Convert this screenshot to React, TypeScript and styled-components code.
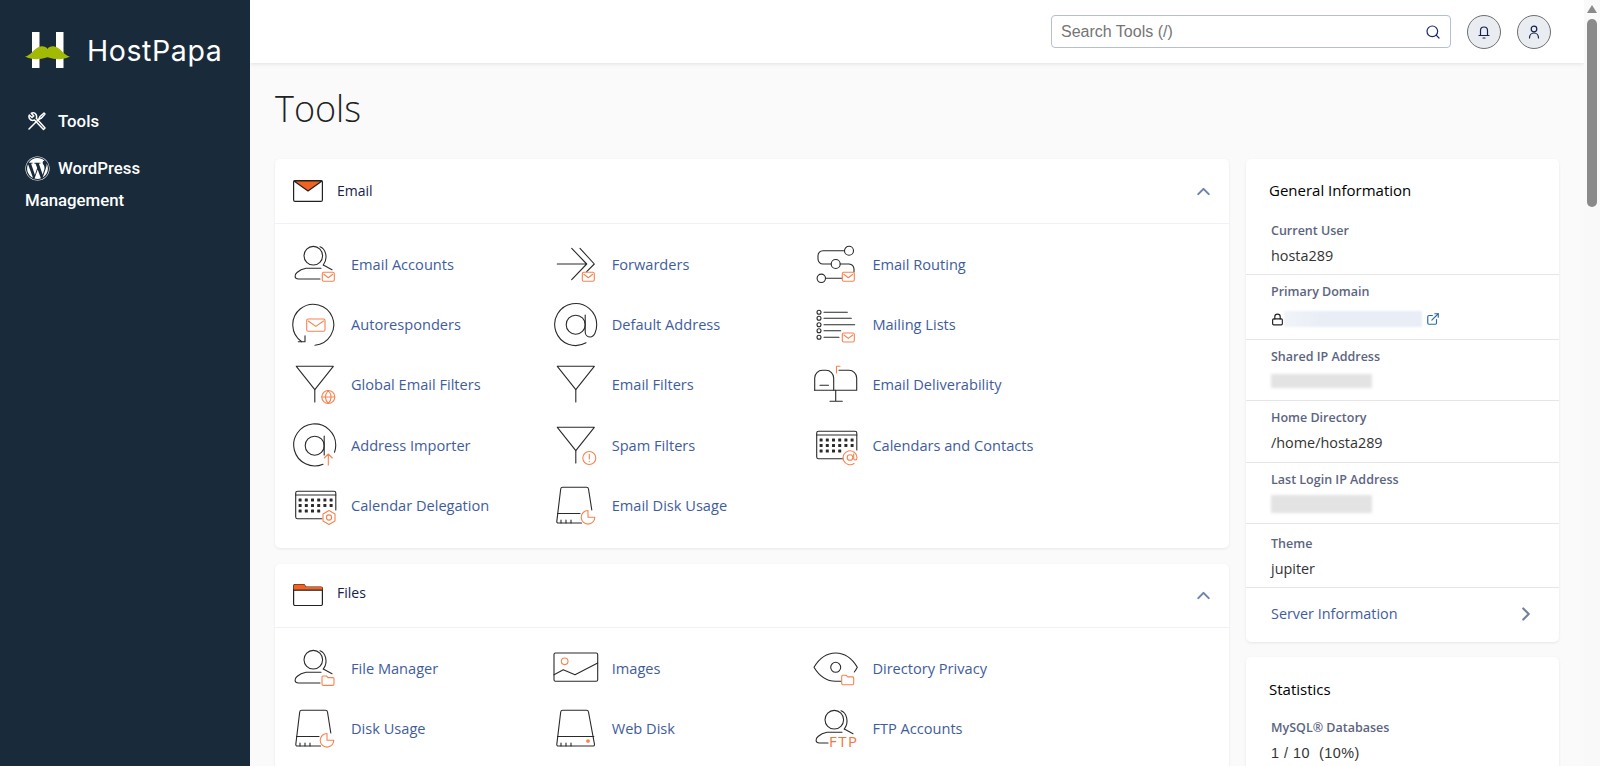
import React from "react";
import styled, { createGlobalStyle } from "styled-components";
import { ChevronUp, ChevronRight, Search, Lock, ExternalLink } from "lucide-react";
import { FaWordpress } from "react-icons/fa";

const Global = createGlobalStyle`
  html, body { margin: 0; padding: 0; height: 100%; overflow: hidden; }
  body { font-family: "Open Sans", "Liberation Sans", sans-serif; background: #fafafa; }
  #root { height: 100%; }
  * { box-sizing: border-box; }
`;

const Shell = styled.div`
  display: flex;
  height: 100vh;
  overflow: hidden;
`;

const Sidebar = styled.aside`
  width: 250px;
  flex: none;
  background: #192b3a;
  color: #fff;
  padding: 31px 25px 0;
`;

const LogoRow = styled.div`
  display: flex;
  align-items: center;
  height: 38px;
  gap: 16px;
  margin-bottom: 35.5px;
`;

const LogoText = styled.span`
  font-family: "Inter", "Lato", sans-serif;
  font-size: 28.5px;
  font-weight: 400;
  letter-spacing: 0.6px;
  line-height: 38px;
  padding-top: 2px;
  color: #fff;
`;

const NavLink = styled.a<{ $gap?: number }>`
  display: block;
  font-family: Roboto, sans-serif;
  font-weight: 500;
  font-size: 16.8px;
  line-height: 32px;
  color: #fff;
  margin-bottom: ${(p) => p.$gap ?? 0}px;
`;

const NavIcon = styled.span`
  display: inline-flex;
  width: 33px;
  height: 26px;
  vertical-align: middle;
  align-items: center;
  font-size: 25px;
  margin-top: -3px;
`;

const Main = styled.main`
  flex: 1;
  min-width: 0;
  height: 100vh;
  overflow: hidden;
  background: #fafafa;
`;

const ScrollRail = styled.div`
  width: 16px;
  flex: none;
  background: #f9f9f9;
  display: flex;
  flex-direction: column;
  align-items: center;
  padding-top: 5px;
`;

const ScrollArrow = styled.div`
  width: 0;
  height: 0;
  border-left: 5.5px solid transparent;
  border-right: 5.5px solid transparent;
  border-bottom: 8px solid #8a8a8a;
  margin-bottom: 6px;
`;

const ScrollThumb = styled.div`
  width: 10px;
  height: 188px;
  border-radius: 5px;
  background: #8a8a8a;
`;

const TopBar = styled.header`
  height: 63px;
  background: #fff;
  box-shadow: 0 1px 4px rgba(0, 0, 0, 0.1);
  display: flex;
  justify-content: flex-end;
  align-items: flex-start;
  padding: 15px 33px 0 0;
  gap: 16px;
`;

const SearchBox = styled.div`
  width: 400px;
  height: 33px;
  border: 1px solid #b4bfd4;
  border-radius: 4px;
  background: #fff;
  display: flex;
  align-items: center;
  justify-content: space-between;
  padding: 0 9px;
  color: #152a6b;
`;

const SearchInput = styled.input`
  border: 0;
  outline: 0;
  flex: 1;
  font-family: "Liberation Sans", Arial, sans-serif;
  font-size: 16px;
  color: #333;
  padding: 0;
  background: transparent;
  &::placeholder { color: #757575; opacity: 1; }
`;

const RoundButton = styled.button`
  width: 34px;
  height: 34px;
  border-radius: 50%;
  border: 1px solid #6f6f6f;
  background: #e9ecf1;
  display: flex;
  align-items: center;
  justify-content: center;
  padding: 0;
  color: #14224d;
`;

const Title = styled.h1`
  margin: 0;
  height: 96px;
  padding: 21px 0 0 25px;
  font-family: "Open Sans", sans-serif;
  font-weight: 300;
  font-size: 36px;
  line-height: 49px;
  color: #222;
`;

const Columns = styled.div`
  display: grid;
  grid-template-columns: 1fr 313px;
  gap: 17px;
  padding: 0 25px;
  align-items: start;
`;

const Stack = styled.div<{ $gap: number }>`
  display: flex;
  flex-direction: column;
  gap: ${(p) => p.$gap}px;
`;

const Card = styled.section`
  background: #fff;
  border-radius: 5px;
  box-shadow: 0 1px 3px rgba(0, 0, 0, 0.08);
`;

const CardHead = styled.div<{ $h: number }>`
  height: ${(p) => p.$h}px;
  display: flex;
  align-items: center;
  padding: 0 15px 0 18px;
  border-bottom: 1.5px solid #eff1f7;
  color: #6d84ad;
`;

const CardTitle = styled.span<{ $lift: number }>`
  font-size: 14px;
  color: #14224d;
  margin-left: 14px;
  margin-bottom: ${(p) => p.$lift}px;
  flex: 1;
`;

const ToolGrid = styled.div<{ $pt: number; $pb: number; $row: number }>`
  display: grid;
  grid-template-columns: repeat(3, 260.7px);
  grid-auto-rows: ${(p) => p.$row}px;
  padding: ${(p) => p.$pt}px 0 ${(p) => p.$pb}px 17px;
`;

const Tool = styled.a`
  display: flex;
  align-items: center;
  gap: 15px;
  font-size: 14.6px;
  color: #3f5d9c;
`;

const Glyph = styled.svg`
  width: 46px;
  height: 46px;
  flex: none;
  margin-right: -2px;
  fill: none;
  stroke: #2a2a2a;
  stroke-width: 1.1;
  stroke-linecap: round;
  stroke-linejoin: round;
`;

const Accent = styled.g`
  stroke: #f8824f;
`;

const Dots = styled.g`
  fill: #2a2a2a;
  stroke: none;
`;

const FtpLabel = styled.text`
  font-family: "Open Sans", sans-serif;
  font-size: 15px;
  letter-spacing: 1.5px;
  fill: #f8733a;
  stroke: none;
`;

const HeadGlyph = styled.svg`
  width: 30px;
  height: 22px;
  flex: none;
  fill: #fff;
  stroke: #222;
  stroke-width: 1.2;
  stroke-linejoin: round;
`;

const InfoCard = styled(Card)`
  overflow: hidden;
`;

const InfoTitle = styled.h2<{ $h: number }>`
  margin: 0;
  height: ${(p) => p.$h}px;
  display: flex;
  align-items: flex-end;
  padding: 0 24px 0 23px;
  font-size: 15px;
  font-weight: 500;
  line-height: 20px;
  color: #000;
`;

const InfoRow = styled.div<{ $h: number; $top?: number; $line?: boolean }>`
  height: ${(p) => p.$h}px;
  padding: ${(p) => p.$top ?? 8}px 25px 0;
  border-bottom: ${(p) => (p.$line === false ? "0" : "1.5px solid #e6e6e6")};
`;

const InfoLabel = styled.div`
  font-size: 12.5px;
  font-weight: 600;
  line-height: 18px;
  color: #5c6580;
  margin-bottom: 6px;
`;

const InfoValue = styled.div`
  font-size: 14.4px;
  line-height: 20px;
  color: #333;
`;

const PlainValue = styled.div`
  font-family: "Liberation Sans", Arial, sans-serif;
  font-size: 14.4px;
  line-height: 20px;
  letter-spacing: 0.5px;
  color: #333;
`;

const DomainLine = styled.div`
  display: flex;
  align-items: center;
  height: 20px;
  margin-top: 8px;
  color: #222;
`;

const DomainMask = styled.div`
  width: 138px;
  height: 16px;
  margin: 0 4px 0 0;
  background: linear-gradient(90deg, #f1f4f9 0%, #e8edf6 30%, #e8edf6 100%);
  filter: blur(1px);
`;

const IpMask = styled.div<{ $h: number; $mt: number }>`
  width: 101px;
  height: ${(p) => p.$h}px;
  margin-top: ${(p) => p.$mt}px;
  background: #e3e3e3;
  filter: blur(1.5px);
`;

const ServerLink = styled.a`
  display: flex;
  align-items: center;
  justify-content: space-between;
  height: 54px;
  padding: 0 22px 3px 25px;
  font-size: 14.4px;
  color: #3f5d9c;
`;

const Chevron = styled.span`
  color: #75829a;
  display: flex;
`;

const Mail = ({ x, y, w = 12, h = 9 }: { x: number; y: number; w?: number; h?: number }) => (
  <Accent>
    <rect x={x} y={y} width={w} height={h} rx="1.5" />
    <path d={`M${x + 1.5} ${y + 2}L${x + w / 2} ${y + h * 0.6}L${x + w - 1.5} ${y + 2}`} />
  </Accent>
);

const FolderBadge = ({ x, y }: { x: number; y: number }) => (
  <Accent>
    <path d={`M${x} ${y + 8}V${y + 1}a1 1 0 0 1 1-1h3.5l1.5 1.6h5a1 1 0 0 1 1 1V${y + 8}a1.4 1.4 0 0 1-1.4 1.4H${x + 1.4}A1.4 1.4 0 0 1 ${x} ${y + 8}Z`} />
  </Accent>
);

const User = ({ end = 28 }: { end?: number }) => (
  <>
    <circle cx="21.3" cy="14.7" r="9.3" />
    <path d="M28 5.7C33.5 7.5 36.500 17 31.300 24" />
    <path d="M31.300 24L40 28.700" />
    <path d={`M${end} 38H6.300C2.500 38 2 34 5 31.500 7.500 29.300 10 28 14 27.300H29`} />
  </>
);

const Funnel = () => (
  <>
    <path d="M4.300 5.300H41.300L22.800 28.700Z" />
    <path d="M22.800 28.700V41" />
  </>
);

const Calendar = () => {
  const cols = [0, 1, 2, 3, 4, 5];
  const rows = [0, 1, 2];
  return (
    <>
      <path d="M30 36.700H5.500A1.800 1.800 0 0 1 3.700 35V11a1.800 1.800 0 0 1 1.800-1.800H42a1.800 1.800 0 0 1 1.800 1.800V28" />
      <path d="M3.700 13H43.700" />
      <Dots>
        {rows.map((r) =>
          cols
            .filter((c) => !(r === 2 && c > 3))
            .map((c) => <rect key={`${r}-${c}`} x={6.6 + c * 6.2} y={16.4 + r * 5.6} width="3" height="3" rx="0.5" />)
        )}
      </Dots>
    </>
  );
};

const Disk = () => (
  <>
    <path d="M28.500 41H5.200a1.400 1.400 0 0 1-1.400-1.600L7.700 7a2 2 0 0 1 2-1.700H33.500a2 2 0 0 1 2 1.700L38.800 28" />
    <path d="M4.500 31.500H27" />
    <path d="M8 38V41M13 38V41M18 38V41" />
  </>
);

const DiskPlain = () => (
  <>
    <path d="M5.200 41a1.400 1.400 0 0 1-1.400-1.600L7.700 7a2 2 0 0 1 2-1.700H33.500a2 2 0 0 1 2 1.700L41.500 39.400a1.400 1.400 0 0 1-1.400 1.600Z" />
    <path d="M4.500 31.500H40.800" />
    <path d="M8 38V41M13 38V41M18 38V41" />
  </>
);

const Pie = () => (
  <Accent>
    <path d="M35 28.500A6.800 6.800 0 1 0 41.800 35.300H35Z" />
  </Accent>
);

const icons: Record<string, React.ReactNode> = {
  emailAccounts: (<><User /><Mail x={30.3} y={31.3} /></>),
  forwarders: (
    <>
      <path d="M4.300 23H33.700M18.700 7.300L33.700 23L18.700 38.700M27 7.300L41.300 23L33.700 30.700" />
      <Mail x={29.3} y={31.3} />
    </>
  ),
  routing: (
    <>
      <circle cx="36" cy="9.700" r="4.500" />
      <path d="M31.500 9.700H10a5 5 0 0 0-5 5V18a5 5 0 0 0 5 5H18" />
      <circle cx="22.700" cy="23" r="4.500" />
      <path d="M27.200 23H36a5.500 5.500 0 0 1 5 5V31" />
      <circle cx="8.300" cy="37.300" r="4.200" />
      <path d="M12.500 37.300H29" />
      <Mail x={29.3} y={31.3} />
    </>
  ),
  autoresponders: (
    <>
      <path d="M23 44.200A20.500 20.500 0 1 0 9.700 40.700" />
      <path d="M6.300 40.700H13V34.700" />
      <Mail x={14.7} y={18} w={18.3} h={12.3} />
    </>
  ),
  defaultAddress: (
    <>
      <circle cx="22.700" cy="23.700" r="9.500" />
      <path d="M32.200 14V31c0 3 2.300 5 5 5 4 0 6.500-6 6.500-12.300A21 21 0 1 0 33 41.800" />
    </>
  ),
  mailing: (
    <>
      <circle cx="6" cy="11.300" r="2" />
      <circle cx="6" cy="17.300" r="2" />
      <circle cx="6" cy="23.700" r="2" />
      <circle cx="6" cy="29.700" r="2" />
      <circle cx="6" cy="36.300" r="2" />
      <path d="M11 11.300H34.300M11 17.300H38.300M11 23.700H41.700M11 29.700H27.700M11 36.300H26" />
      <Mail x={29.3} y={32} />
    </>
  ),
  globalFilters: (
    <>
      <Funnel />
      <Accent>
        <circle cx="36.300" cy="36" r="6.500" />
        <path d="M29.800 36H42.800M36.300 29.500c-3.500 4-3.500 9 0 13M36.300 29.500c3.500 4 3.500 9 0 13" />
      </Accent>
    </>
  ),
  filters: <Funnel />,
  deliverability: (
    <>
      <path d="M1.700 29.300V17a7.700 7.700 0 0 1 7.700-7.700h3.600a7.700 7.700 0 0 1 7.700 7.700V29.300" />
      <path d="M1.700 29.300H43.700V17a7.700 7.700 0 0 0-7.700-7.700H26" />
      <path d="M7 24.300H15.500M22.700 29.300V40.300M17 40.300H29.300" />
      <Accent><path d="M23.500 12V5.300H27" /></Accent>
    </>
  ),
  importer: (
    <>
      <circle cx="22.700" cy="23.700" r="9.500" />
      <path d="M32.200 14V33" />
      <path d="M31 42.200A21 21 0 1 1 43.700 23.700c0 2.500-.4 4.500-1.200 6.500" />
      <Accent><path d="M36.300 43V32M32.300 36L36.300 32L40.300 36" /></Accent>
    </>
  ),
  spam: (
    <>
      <Funnel />
      <Accent>
        <circle cx="36.300" cy="36" r="6.500" />
        <path d="M36.300 32.300V37M36.300 39.300V39.600" />
      </Accent>
    </>
  ),
  calendars: (
    <>
      <Calendar />
      <Accent>
        <path d="M41 41.500A7 7 0 1 1 44 35.500c0 3-3.300 3.500-3.300.5V32" />
        <circle cx="37" cy="35.500" r="2.800" />
      </Accent>
    </>
  ),
  delegation: (
    <>
      <Calendar />
      <Accent>
        <path d="M37 28.500L43 32V39L37 42.500L31 39V32Z" />
        <circle cx="37" cy="35.500" r="2.600" />
      </Accent>
    </>
  ),
  emailDisk: (<><Disk /><Pie /></>),
  fileManager: (<><User /><FolderBadge x={30} y={31} /></>),
  images: (
    <>
      <rect x="1" y="8" width="43.700" height="28.300" rx="1.500" />
      <path d="M1 29.700L10.300 24.700L22 29.700L44.700 18" />
      <Accent><circle cx="11.700" cy="16.300" r="3.300" /></Accent>
    </>
  ),
  privacy: (
    <>
      <path d="M28 36.300H22.700C12 36.300 5 29 1 22.300 5 15.500 12 8 22.700 8S40.300 15.500 44.300 22.300C43.500 24 42.500 25.500 41.300 27" />
      <circle cx="22.700" cy="22.300" r="5" />
      <FolderBadge x={28.700} y={30.300} />
    </>
  ),
  diskUsage: (<><Disk /><Pie /></>),
  webDisk: (
    <>
      <DiskPlain />
      <circle cx="35" cy="36" r="1.300" fill="#f8824f" stroke="#f8824f" />
    </>
  ),
  ftp: (
    <>
      <User end={15} />
      <FtpLabel x="16" y="42">FTP</FtpLabel>
    </>
  ),
};

const emailTools: [string, string][] = [
  ["emailAccounts", "Email Accounts"],
  ["forwarders", "Forwarders"],
  ["routing", "Email Routing"],
  ["autoresponders", "Autoresponders"],
  ["defaultAddress", "Default Address"],
  ["mailing", "Mailing Lists"],
  ["globalFilters", "Global Email Filters"],
  ["filters", "Email Filters"],
  ["deliverability", "Email Deliverability"],
  ["importer", "Address Importer"],
  ["spam", "Spam Filters"],
  ["calendars", "Calendars and Contacts"],
  ["delegation", "Calendar Delegation"],
  ["emailDisk", "Email Disk Usage"],
];

const fileTools: [string, string][] = [
  ["fileManager", "File Manager"],
  ["images", "Images"],
  ["privacy", "Directory Privacy"],
  ["diskUsage", "Disk Usage"],
  ["webDisk", "Web Disk"],
  ["ftp", "FTP Accounts"],
];

const ToolLink = ({ icon, label }: { icon: string; label: string }) => (
  <Tool>
    <Glyph viewBox="0 0 46 46">{icons[icon]}</Glyph>
    {label}
  </Tool>
);

export default function App() {
  return (
    <Shell>
      <Global />
      <Sidebar>
        <LogoRow>
          <svg width="46" height="38" viewBox="0 0 46 38">
            <path d="M7 1h7.500v36H7zM31 1h7.500v36H31z" fill="#fff" />
            <path d="M0 25.500C6 25 9 16.500 15.500 15.500c3-.5 6 .5 7 2.500 1-2 4-3 7-2.500C36 16.500 39 25 45 25.500c-7 3.500-14 3.500-22.500 .8C14 29 7 29 0 25.500Z" fill="#a3ba05" />
          </svg>
          <LogoText>HostPapa</LogoText>
        </LogoRow>
        <NavLink $gap={15.5}>
          <NavIcon>
            <svg width="20" height="20" viewBox="0 0 20 20" fill="none" stroke="#fff" strokeWidth="1.5" strokeLinecap="round" strokeLinejoin="round" style={{ marginLeft: 2 }}>
              <path d="M2 18L11.500 8.500M11.500 8.500L13 5.500L17 2L18 3L14.500 7L11.500 8.500" />
              <path d="M18 17L16.500 18.500L7.500 9C5.500 9.800 3.500 9 2.500 7.500 1.800 6.300 1.800 5 2.300 4L5 6.500L6.800 5L4.300 2.300C6 1.500 8 2 9 3.500 9.800 4.800 9.800 6 9.300 7.300Z" />
            </svg>
          </NavIcon>
          Tools
        </NavLink>
        <NavLink>
          <NavIcon><FaWordpress /></NavIcon>
          WordPress Management
        </NavLink>
      </Sidebar>
      <Main>
        <TopBar>
          <SearchBox>
            <SearchInput placeholder="Search Tools (/)" readOnly />
            <Search size={16} strokeWidth={1.8} />
          </SearchBox>
          <RoundButton aria-label="Notifications">
            <svg width="16" height="16" viewBox="0 0 16 16" fill="none" stroke="currentColor" strokeWidth="1.2" strokeLinecap="round">
              <path d="M4.500 11.500V6.500a3.500 3.500 0 0 1 7 0V11.500M3 11.500H13M7 14H9" />
            </svg>
          </RoundButton>
          <RoundButton aria-label="Account">
            <svg width="16" height="16" viewBox="0 0 16 16" fill="none" stroke="currentColor" strokeWidth="1.2" strokeLinecap="round">
              <circle cx="8" cy="5" r="2.800" />
              <path d="M3.500 14c0-3 2-5 4.500-5s4.500 2 4.500 5" />
            </svg>
          </RoundButton>
        </TopBar>
        <Title>Tools</Title>
        <Columns>
          <Stack $gap={16}>
            <Card>
              <CardHead $h={65}>
                <HeadGlyph viewBox="0 0 30 22">
                  <rect x="0.600" y="0.600" width="28.800" height="20.800" rx="1.500" />
                  <path d="M1 1H29L15 11Z" fill="#f4621f" stroke="#222" />
                </HeadGlyph>
                <CardTitle $lift={2}>Email</CardTitle>
                <ChevronUp size={21} strokeWidth={2.4} />
              </CardHead>
              <ToolGrid $pt={9.5} $pb={12.5} $row={60.4}>
                {emailTools.map(([icon, label]) => <ToolLink key={label} icon={icon} label={label} />)}
              </ToolGrid>
            </Card>
            <Card>
              <CardHead $h={64}>
                <HeadGlyph viewBox="0 0 30 22">
                  <path d="M0.600 20V2a1.500 1.500 0 0 1 1.500-1.500H11L13 3H28a1.500 1.500 0 0 1 1.400 1.500V20a1.500 1.500 0 0 1-1.500 1.500H2A1.500 1.500 0 0 1 .6 20Z" />
                  <path d="M0.600 5V2a1.500 1.500 0 0 1 1.500-1.500H11L13 3H28a1.500 1.500 0 0 1 1.400 1.500V6H1Z" fill="#f4621f" stroke="none" />
                  <path d="M0.600 6.200H29.400" />
                </HeadGlyph>
                <CardTitle $lift={5}>Files</CardTitle>
                <ChevronUp size={21} strokeWidth={2.4} />
              </CardHead>
              <ToolGrid $pt={10} $pb={11} $row={60}>
                {fileTools.map(([icon, label]) => <ToolLink key={label} icon={icon} label={label} />)}
              </ToolGrid>
            </Card>
          </Stack>
          <Stack $gap={15}>
            <InfoCard>
              <InfoTitle $h={41}>General Information</InfoTitle>
              <InfoRow $h={75} $top={22}>
                <InfoLabel>Current User</InfoLabel>
                <InfoValue>hosta289</InfoValue>
              </InfoRow>
              <InfoRow $h={65}>
                <InfoLabel>Primary Domain</InfoLabel>
                <DomainLine>
                  <Lock size={13} strokeWidth={2.2} />
                  <DomainMask />
                  <ExternalLink size={14} strokeWidth={2} color="#2b6ca3" />
                </DomainLine>
              </InfoRow>
              <InfoRow $h={61}>
                <InfoLabel>Shared IP Address</InfoLabel>
                <IpMask $h={14} $mt={8} />
              </InfoRow>
              <InfoRow $h={62}>
                <InfoLabel>Home Directory</InfoLabel>
                <InfoValue>/home/hosta289</InfoValue>
              </InfoRow>
              <InfoRow $h={61}>
                <InfoLabel>Last Login IP Address</InfoLabel>
                <IpMask $h={18} $mt={5} />
              </InfoRow>
              <InfoRow $h={64} $top={11}>
                <InfoLabel>Theme</InfoLabel>
                <InfoValue>jupiter</InfoValue>
              </InfoRow>
              <ServerLink>
                Server Information
                <Chevron><ChevronRight size={22} strokeWidth={2.4} /></Chevron>
              </ServerLink>
            </InfoCard>
            <InfoCard>
              <InfoTitle $h={42}>Statistics</InfoTitle>
              <InfoRow $h={90} $top={20} $line={false}>
                <InfoLabel>MySQL® Databases</InfoLabel>
                <PlainValue>1 / 10 &nbsp;(10%)</PlainValue>
              </InfoRow>
            </InfoCard>
          </Stack>
        </Columns>
      </Main>
      <ScrollRail>
        <ScrollArrow />
        <ScrollThumb />
      </ScrollRail>
    </Shell>
  );
}
